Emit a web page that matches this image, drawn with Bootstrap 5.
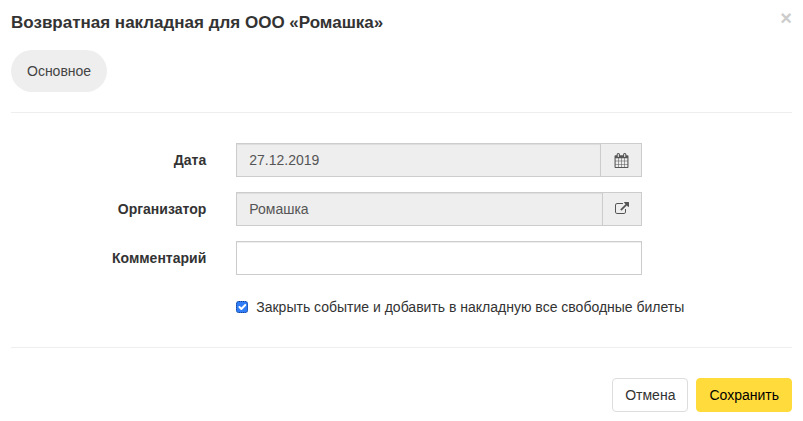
<!DOCTYPE html>
<html lang="ru">
<head>
<meta charset="utf-8">
<meta name="viewport" content="width=device-width, initial-scale=1">
<title>Возвратная накладная</title>
<link href="https://cdn.jsdelivr.net/npm/bootstrap@5.3.0/dist/css/bootstrap.min.css" rel="stylesheet">
<style>
body { font-family: "Liberation Sans", Arial, sans-serif; font-size: 14px; line-height: 20px; color: #333; background: #fff; }
.dialog { padding: 10px 11px 9px; }
.dialog-title { font-size: 17px; line-height: 26px; font-weight: 700; }
.dialog-close { font-size: 20px; line-height: 16px; font-weight: 700; color: #ccc; }
.tab-pill { height: 42px; padding: 0 16px; border-radius: 21px; background: #eee; color: #444; font-size: 14px; margin-top: 14px; }
.tab-pill:hover { background: #e6e6e6; }
.dialog-body { border: solid #eee; border-width: 1px 0; margin-top: 20px; padding: 30px 0 23px; gap: 15px; }
.form-line { display: grid; grid-template-columns: 25% 52%; column-gap: 30px; align-items: center; }
.form-line label.line-label { font-weight: 700; text-align: right; }
.form-line .form-control { height: 34px; padding: 0 12px; border: 1px solid #ccc; border-radius: 0; font-size: 14px; color: #555; box-shadow: inset 0 1px 1px #00000013; }
.form-line .form-control[readonly] { background: #eee; }
.form-line .addon { width: 42px; height: 34px; padding: 0; border: 1px solid #ccc; border-radius: 0; background: #eee; color: #555; }
.form-line .addon-narrow { width: 40px; }
.check-line { grid-column: 2; height: 34px; white-space: nowrap; gap: 8px; }
.check-line .form-check-input { width: 12px; height: 12px; border-radius: 3px; border: 1px dotted #123a80; box-shadow: none; }
.check-line .form-check-input:checked { background-color: #2f7cf6; border-color: #123a80; background-size: 13px; background-position: center; }
.dialog-footer { padding-top: 30px; gap: 8px; }
.dialog-footer .btn { height: 34px; padding: 0 12px; font-size: 14px; line-height: 20px; border-radius: 4px; }
.btn-cancel { border: 1px solid #ddd; color: #333; background: #fff; }
.btn-save, .btn-save:hover { border: 1px solid #ffdb3b; background: #ffdb3b; color: #000; }
</style>
</head>
<body>
<main class="dialog">
  <header>
    <div class="d-flex justify-content-between align-items-start">
      <h1 class="dialog-title m-0">Возвратная накладная для ООО «Ромашка»</h1>
      <button type="button" class="dialog-close border-0 bg-transparent p-0" aria-label="Закрыть">×</button>
    </div>
    <button type="button" class="tab-pill border-0 d-block">Основное</button>
  </header>
  <form>
    <div class="dialog-body d-flex flex-column">
      <div class="form-line">
        <label class="line-label" for="date">Дата</label>
        <div class="input-group flex-nowrap">
          <input id="date" class="form-control" type="text" value="27.12.2019" readonly>
          <button type="button" class="btn addon d-flex align-items-center justify-content-center" aria-label="Календарь">
            <svg width="15" height="15" viewBox="0 0 1792 1792" fill="currentColor" aria-hidden="true"><path d="M192 1664h288v-288h-288v288zm352 0h320v-288h-320v288zm-352-352h288v-320h-288v320zm352 0h320v-320h-320v320zm-352-384h288v-288h-288v288zm736 736h320v-288h-320v288zm-384-736h320v-288h-320v288zm768 736h288v-288h-288v288zm-384-352h320v-320h-320v320zm-352-864v-288q0-13-9.500-22.500t-22.500-9.500h-64q-13 0-22.500 9.500t-9.500 22.500v288q0 13 9.500 22.500t22.500 9.500h64q13 0 22.500-9.500t9.500-22.500zm736 864h288v-320h-288v320zm-384-384h320v-288h-320v288zm384 0h288v-288h-288v288zm32-480v-288q0-13-9.500-22.500t-22.500-9.500h-64q-13 0-22.500 9.500t-9.500 22.500v288q0 13 9.500 22.500t22.500 9.500h64q13 0 22.500-9.500t9.500-22.500zm384-64v1280q0 52-38 90t-90 38h-1408q-52 0-90-38t-38-90v-1280q0-52 38-90t90-38h128v-96q0-66 47-113t113-47h64q66 0 113 47t47 113v96h384v-96q0-66 47-113t113-47h64q66 0 113 47t47 113v96h128q52 0 90 38t38 90z"/></svg>
          </button>
        </div>
      </div>
      <div class="form-line">
        <label class="line-label" for="org">Организатор</label>
        <div class="input-group flex-nowrap">
          <input id="org" class="form-control" type="text" value="Ромашка" readonly>
          <button type="button" class="btn addon addon-narrow d-flex align-items-center justify-content-center" aria-label="Открыть организатора">
            <svg width="14" height="14" viewBox="0 0 1792 1792" fill="currentColor" aria-hidden="true"><path d="M1408 928v320q0 119-84.500 203.500t-203.500 84.500h-832q-119 0-203.500-84.500t-84.500-203.500v-832q0-119 84.500-203.500t203.500-84.500h704q14 0 23 9t9 23v64q0 14-9 23t-23 9h-704q-66 0-113 47t-47 113v832q0 66 47 113t113 47h832q66 0 113-47t47-113v-320q0-14 9-23t23-9h64q14 0 23 9t9 23zm384-864v512q0 26-19 45t-45 19-45-19l-176-176-652 652q-10 10-23 10t-23-10l-114-114q-10-10-10-23t10-23l652-652-176-176q-19-19-19-45t19-45 45-19h512q26 0 45 19t19 45z"/></svg>
          </button>
        </div>
      </div>
      <div class="form-line">
        <label class="line-label" for="comment">Комментарий</label>
        <input id="comment" class="form-control" type="text">
      </div>
      <div class="form-line">
        <div class="check-line d-flex align-items-center">
          <input id="close-event" class="form-check-input m-0 flex-shrink-0" type="checkbox" checked>
          <label for="close-event">Закрыть событие и добавить в накладную все свободные билеты</label>
        </div>
      </div>
    </div>
    <footer class="dialog-footer d-flex justify-content-end">
      <button type="button" class="btn btn-cancel">Отмена</button>
      <button type="submit" class="btn btn-save">Сохранить</button>
    </footer>
  </form>
</main>
<script src="https://cdn.jsdelivr.net/npm/bootstrap@5.3.0/dist/js/bootstrap.bundle.min.js"></script>
</body>
</html>
